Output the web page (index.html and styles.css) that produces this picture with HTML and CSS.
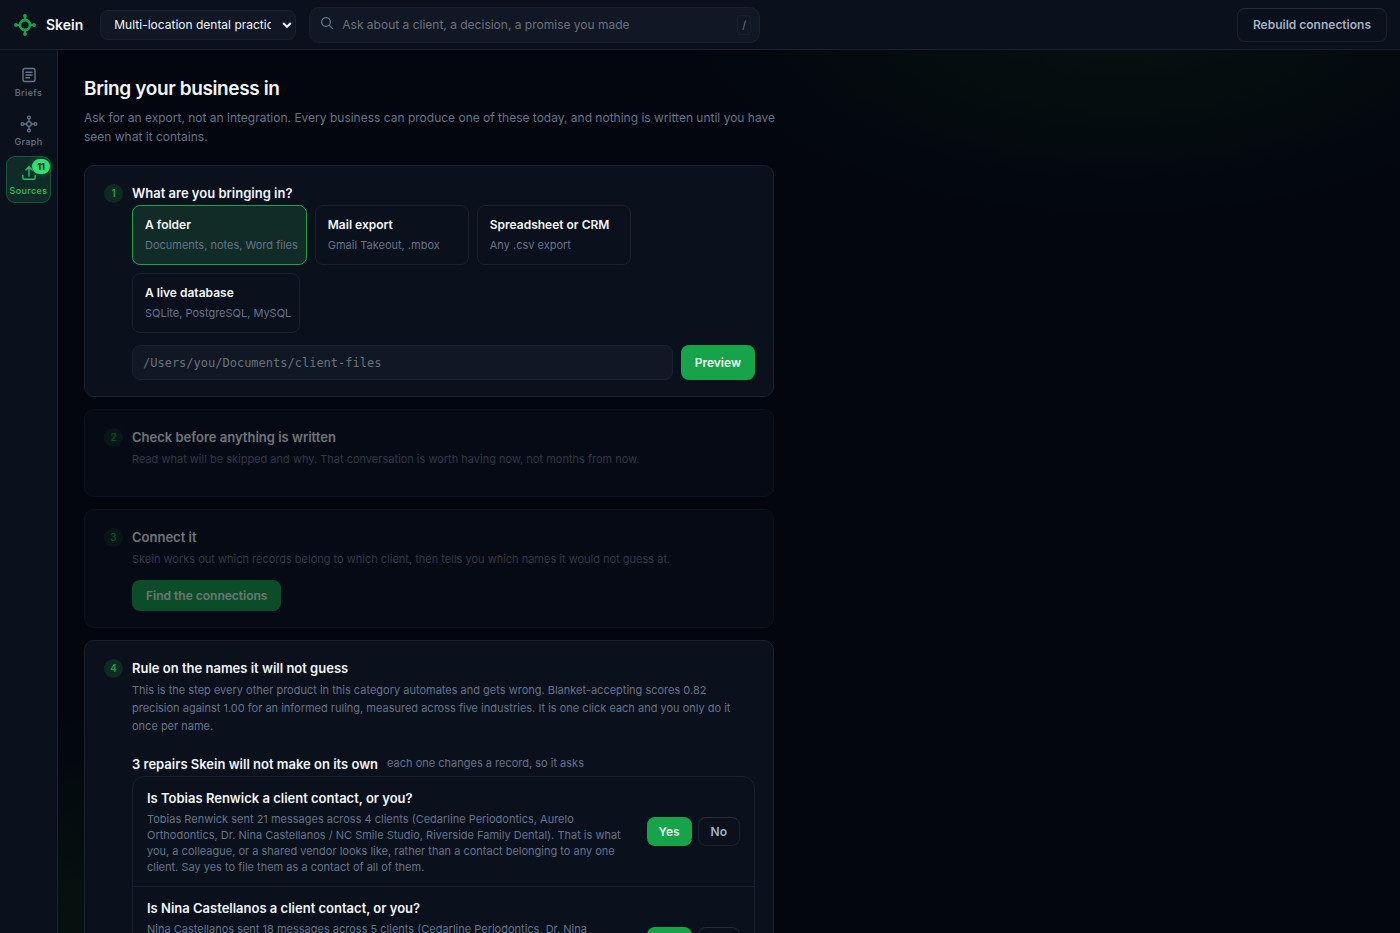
FILE: index.html
```html
<!DOCTYPE html>
<html lang="en">
<head>
  <meta charset="UTF-8">
  <meta name="viewport" content="width=device-width, initial-scale=1">
  <title>Skein – Sources</title>
  <link rel="stylesheet" href="styles.css">
</head>
<body>
  <header class="topbar">
    <a class="brand" href="#">
      <svg width="24" height="24" viewBox="0 0 24 24" fill="none" stroke="currentColor" stroke-width="2" aria-hidden="true">
        <circle cx="12" cy="12" r="5" stroke-width="2.8"/>
        <path d="M12 7V3M12 17v4M7 12H3M17 12h4"/>
        <g fill="currentColor" stroke="none">
          <circle cx="12" cy="3" r="1.9"/>
          <circle cx="12" cy="21" r="1.9"/>
          <circle cx="3" cy="12" r="1.9"/>
          <circle cx="21" cy="12" r="1.9"/>
        </g>
      </svg>
      <span>Skein</span>
    </a>
    <div class="picker">
      <select aria-label="Workspace">
        <option>Multi-location dental practice</option>
      </select>
      <svg width="10" height="8" viewBox="0 0 10 8" fill="none" stroke="currentColor" stroke-width="2" aria-hidden="true"><path d="M1.2 2 5 5.8 8.8 2"/></svg>
    </div>
    <label class="search">
      <svg width="14" height="14" viewBox="0 0 14 14" fill="none" stroke="currentColor" stroke-width="1.3" stroke-linecap="round" aria-hidden="true"><circle cx="6" cy="6" r="4.4"/><path d="m9.4 9.4 3 3"/></svg>
      <input type="search" aria-label="Ask" placeholder="Ask about a client, a decision, a promise you made">
      <kbd>/</kbd>
    </label>
    <button class="btn ghost rebuild" type="button">Rebuild connections</button>
  </header>

  <div class="shell">
    <nav class="rail">
      <a href="#briefs">
        <svg width="18" height="18" viewBox="0 0 18 18" fill="none" stroke="currentColor" stroke-width="1.4" stroke-linecap="round" aria-hidden="true"><rect x="3" y="2.5" width="12" height="13" rx="2"/><path d="M6 6.3h6M6 9h6M6 11.7h3.5"/></svg>
        <span>Briefs</span>
      </a>
      <a href="#graph">
        <svg width="18" height="18" viewBox="0 0 18 18" fill="none" stroke="currentColor" stroke-width="1.3" aria-hidden="true"><circle cx="9" cy="9" r="2.3"/><circle cx="9" cy="2.5" r="1.4"/><circle cx="9" cy="15.5" r="1.4"/><circle cx="2.5" cy="9" r="1.4"/><circle cx="15.5" cy="9" r="1.4"/><path d="M9 3.9v2.8M9 11.3v2.8M3.9 9h2.8M11.3 9h2.8"/></svg>
        <span>Graph</span>
      </a>
      <a class="active" href="#sources" aria-current="page">
        <svg width="18" height="18" viewBox="0 0 18 18" fill="none" stroke="currentColor" stroke-width="1.4" stroke-linecap="round" stroke-linejoin="round" aria-hidden="true"><path d="M9 12V3M5.8 6 9 2.8 12.2 6M2.8 11.5v2.2a1.6 1.6 0 0 0 1.6 1.6h9.2a1.6 1.6 0 0 0 1.6-1.6v-2.2"/></svg>
        <span>Sources</span>
        <b class="badge">11</b>
      </a>
    </nav>

    <main class="content">
      <h1>Bring your business in</h1>
      <p class="lede">Ask for an export, not an integration. Every business can produce one of these today, and nothing is written until you have seen what it contains.</p>

      <section class="step">
        <span class="num">1</span>
        <div class="body">
          <h2>What are you bringing in?</h2>
          <div class="kinds">
            <button class="kind on" type="button"><b>A folder</b><span>Documents, notes, Word files</span></button>
            <button class="kind" type="button"><b>Mail export</b><span>Gmail Takeout, .mbox</span></button>
            <button class="kind" type="button"><b>Spreadsheet or CRM</b><span>Any .csv export</span></button>
            <button class="kind" type="button"><b>A live database</b><span>SQLite, PostgreSQL, MySQL</span></button>
          </div>
          <div class="path-row">
            <input type="text" aria-label="Path" placeholder="/Users/you/Documents/client-files">
            <button class="btn primary" type="button">Preview</button>
          </div>
        </div>
      </section>

      <section class="step locked">
        <span class="num">2</span>
        <div class="body">
          <h2>Check before anything is written</h2>
          <p>Read what will be skipped and why. That conversation is worth having now, not months from now.</p>
        </div>
      </section>

      <section class="step locked">
        <span class="num">3</span>
        <div class="body">
          <h2>Connect it</h2>
          <p>Skein works out which records belong to which client, then tells you which names it would not guess at.</p>
          <button class="btn primary" type="button">Find the connections</button>
        </div>
      </section>

      <section class="step">
        <span class="num">4</span>
        <div class="body">
          <h2>Rule on the names it will not guess</h2>
          <p>This is the step every other product in this category automates and gets wrong. Blanket-accepting scores 0.82 precision against 1.00 for an informed ruling, measured across five industries. It is one click each and you only do it once per name.</p>
          <div class="repairs-head">
            <h3>3 repairs Skein will not make on its own</h3>
            <span>each one changes a record, so it asks</span>
          </div>
          <ul class="repairs">
            <li>
              <div class="why">
                <h4>Is Tobias Renwick a client contact, or you?</h4>
                <p>Tobias Renwick sent 21 messages across 4 clients (Cedarline Periodontics, Aurelo Orthodontics, Dr. Nina Castellanos / NC Smile Studio, Riverside Family Dental). That is what you, a colleague, or a shared vendor looks like, rather than a contact belonging to any one client. Say yes to file them as a contact of all of them.</p>
              </div>
              <button class="btn primary small" type="button">Yes</button>
              <button class="btn ghost small" type="button">No</button>
            </li>
            <li>
              <div class="why">
                <h4>Is Nina Castellanos a client contact, or you?</h4>
                <p>Nina Castellanos sent 18 messages across 5 clients (Cedarline Periodontics, Dr. Nina Castellanos / NC Smile Studio, Riverside Family Dental, Aurelo Orthodontics). That is what you, a colleague, or a shared vendor looks like, rather than a contact belonging to any one client. Say yes to file them as a contact of all of them.</p>
              </div>
              <button class="btn primary small" type="button">Yes</button>
              <button class="btn ghost small" type="button">No</button>
            </li>
          </ul>
        </div>
      </section>
    </main>
  </div>
</body>
</html>
```
FILE: styles.css
```css
:root {
  --bg: #03060e;
  --panel: #0a101c;
  --field: #111825;
  --line: #182130;
  --text: #f1f5f9;
  --soft: #a3afc2;
  --muted: #64748b;
  --green: #16a34a;
  --bright: #22c55e;
}

* {
  box-sizing: border-box;
}

body {
  margin: 0;
  height: 100vh;
  display: flex;
  flex-direction: column;
  overflow: hidden;
  font-family: Inter, "Liberation Sans", sans-serif;
  font-size: 12px;
  color: var(--text);
  background:
    radial-gradient(ellipse 440px 220px at 80% 0, #06130f, transparent),
    radial-gradient(ellipse 440px 220px at 0 100%, #06130f, transparent),
    var(--bg);
}

h1, h2, h3, h4, p, ul {
  margin: 0;
  padding: 0;
}

a {
  color: inherit;
  text-decoration: none;
}

button, input, select {
  font: inherit;
  color: inherit;
}

/* top bar */
.topbar {
  flex: none;
  display: flex;
  align-items: center;
  height: 50px;
  padding: 0 13px;
  background: var(--panel);
  border-bottom: 1px solid var(--line);
}

.brand {
  display: flex;
  align-items: center;
  gap: 9px;
  margin-right: 17px;
  font-size: 14px;
  font-weight: 600;
}

.brand svg {
  color: var(--green);
}

.picker {
  display: grid;
  align-items: center;
  width: 196px;
  margin-right: 13px;
}

.picker select, .picker svg {
  grid-area: 1 / 1;
}

.picker select {
  appearance: none;
  width: 100%;
  height: 30px;
  padding: 0 24px 0 13px;
  background: var(--field);
  border: 1px solid var(--line);
  border-radius: 8px;
}

.picker svg {
  justify-self: end;
  margin-right: 4px;
  pointer-events: none;
}

.search {
  display: flex;
  align-items: center;
  gap: 8px;
  width: 451px;
  height: 36px;
  padding: 0 8px 0 10px;
  color: var(--muted);
  background: var(--field);
  border: 1px solid var(--line);
  border-radius: 10px;
}

.search svg {
  margin-bottom: 4px;
}

.search input {
  flex: 1;
  min-width: 0;
  padding: 0;
  border: 0;
  outline: 0;
  background: none;
}

::placeholder {
  color: #6b7079;
}

.search kbd {
  padding: 2px 4px;
  font: inherit;
  font-size: 11px;
  border: 1px solid var(--line);
  border-radius: 4px;
}

.btn {
  flex: none;
  height: 31px;
  padding: 0 14px;
  font-weight: 600;
  border: 0;
  border-radius: 8px;
}

.primary {
  color: #eafbf0;
  background: var(--green);
}

.ghost {
  color: var(--soft);
  background: none;
  border: 1px solid #1a2230;
  border-top-color: #252d3a;
}

.rebuild {
  height: 34px;
  margin-left: auto;
  padding: 0 15px;
}

.small {
  height: 29px;
  padding: 0 12px;
}

/* side rail */
.shell {
  flex: 1;
  min-height: 0;
  display: flex;
}

.rail {
  flex: none;
  display: flex;
  flex-direction: column;
  align-items: center;
  gap: 2px;
  width: 58px;
  padding-top: 8px;
  background: var(--panel);
  border-right: 1px solid var(--line);
}

.rail a {
  position: relative;
  display: flex;
  flex-direction: column;
  align-items: center;
  gap: 3px;
  width: 45px;
  height: 47px;
  padding-top: 7px;
  font-size: 9px;
  font-weight: 500;
  letter-spacing: 0.04em;
  color: var(--muted);
  border: 1px solid transparent;
  border-radius: 9px;
}

.rail .active {
  color: var(--bright);
  background: #102a27;
  border-color: #15563a;
}

.badge {
  position: absolute;
  top: 2px;
  right: 0;
  padding: 0 5px;
  font-size: 9px;
  line-height: 15px;
  letter-spacing: 0;
  color: #04120a;
  background: #34de72;
  border-radius: 8px;
  box-shadow: 0 0 6px rgba(34, 197, 94, 0.4);
}

/* steps */
.content {
  flex: 1;
  overflow-y: auto;
  scrollbar-width: none;
  padding: 27px 26px;
}

h1 {
  font-size: 19px;
  line-height: 24px;
  letter-spacing: -0.02em;
  font-weight: 600;
}

.lede {
  max-width: 710px;
  margin: 7px 0 19px;
  line-height: 19px;
  color: var(--muted);
}

.step {
  display: flex;
  gap: 9px;
  max-width: 690px;
  margin-bottom: 12px;
  padding: 17px 18px 16px 19px;
  background: var(--panel);
  border: 1px solid var(--line);
  border-radius: 10px;
}

.locked {
  opacity: 0.45;
}

.num {
  flex: none;
  width: 19px;
  height: 19px;
  margin-top: 1px;
  font-size: 10px;
  line-height: 19px;
  font-weight: 600;
  text-align: center;
  color: var(--green);
  background: #0e2a23;
  border-radius: 50%;
}

.body {
  flex: 1;
  min-width: 0;
}

h2, h3, h4 {
  font-size: 13px;
  line-height: 20px;
  font-weight: 600;
}

.body > p {
  margin: 3px 0 12px;
  font-size: 11px;
  line-height: 18px;
  color: var(--muted);
}

.kinds {
  display: flex;
  flex-wrap: wrap;
  gap: 8px;
  margin: 2px 0 12px;
}

.kind {
  display: flex;
  flex-direction: column;
  gap: 4px;
  min-width: 154px;
  padding: 11px 8px 11px 12px;
  text-align: left;
  line-height: 16px;
  background: none;
  border: 1px solid var(--line);
  border-radius: 8px;
}

.kind b {
  font-weight: 600;
}

.kind span {
  font-size: 11px;
  color: var(--muted);
}

.kind.on {
  background: #112b27;
  border-color: var(--green);
}

.path-row {
  display: flex;
  gap: 8px;
}

.path-row input {
  flex: 1;
  min-width: 0;
  height: 35px;
  padding: 0 10px;
  font-family: "DejaVu Sans Mono", monospace;
  background: var(--field);
  border: 1px solid var(--line);
  border-radius: 8px;
}

.path-row .btn {
  height: 35px;
}

.repairs-head {
  display: flex;
  gap: 9px;
  margin-top: 19px;
  line-height: 18px;
}

.repairs-head span {
  font-size: 11px;
  color: var(--muted);
}

.repairs {
  margin-top: 2px;
  list-style: none;
  border: 1px solid var(--line);
  border-radius: 12px;
}

.repairs li {
  display: flex;
  align-items: center;
  gap: 6px;
  padding: 11px 14px;
}

.repairs li + li {
  border-top: 1px solid var(--line);
}

.why {
  flex: 1;
  margin-right: 12px;
}

.why p {
  margin-top: 3px;
  font-size: 11px;
  line-height: 16px;
  color: var(--muted);
}
```
